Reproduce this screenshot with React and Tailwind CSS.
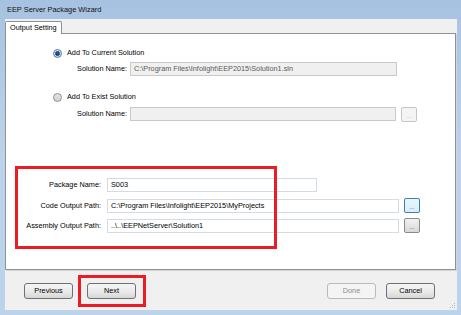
import React from "react";

function TextBox({ value = "", disabled = false, className = "" }) {
  return (
    <div
      className={`h-[14px] border flex items-center pl-[3px] whitespace-nowrap overflow-hidden ${
        disabled
          ? "bg-[#f0f0f0] border-[#c9c9c9] text-[#5a5a5a]"
          : "bg-white border-[#d5dbe3] text-black"
      } ${className}`}
    >
      {value}
    </div>
  );
}

function DotsButton({ variant = "normal" }) {
  const styles = {
    disabled: "border-[#c4c4c4] bg-[#f4f4f4] text-[#b0b0b0]",
    focus: "border-[#3c7fb1] bg-gradient-to-b from-[#eaf6fd] to-[#d9eefa] text-[#444]",
    normal: "border-[#8a8a8a] bg-gradient-to-b from-[#f2f2f2] to-[#d8d8d8] text-[#444]",
  };
  return (
    <div
      className={`ml-[5px] w-[16px] h-[15px] rounded-[2px] border flex items-center justify-center text-[6px] leading-none pt-[3px] ${styles[variant]}`}
    >
      ...
    </div>
  );
}

function Button({ label, disabled = false }) {
  return (
    <div
      className={`w-[49px] h-[16px] rounded-[3px] border flex items-center justify-center ${
        disabled
          ? "border-[#b9bcbe] bg-[#f4f4f4] text-[#8d8d8d]"
          : "border-[#707070] bg-gradient-to-b from-[#f6f6f6] via-[#ebebeb] to-[#d7d7d7] text-black"
      }`}
    >
      {label}
    </div>
  );
}

function Radio({ checked }) {
  return (
    <div
      className={`w-[9px] h-[9px] rounded-full border flex items-center justify-center ${
        checked
          ? "border-[#5b7a98] bg-gradient-to-b from-[#dfe9f3] to-[#c5d6e8]"
          : "border-[#8e8f8f] bg-gradient-to-b from-[#e6e6e6] to-[#cfcfcf]"
      }`}
    >
      {checked && (
        <div className="w-[5px] h-[5px] rounded-full bg-gradient-to-b from-[#2a6fb0] to-[#0c3d73] border border-[#0a3a6a]" />
      )}
    </div>
  );
}

export default function App() {
  return (
    <div
      className="relative w-[461px] h-[315px] flex flex-col bg-gradient-to-b from-[#a7c2e1] via-[#bdd3ec] to-[#bcd3ec] text-[7.3px] leading-none text-black overflow-hidden"
      style={{ fontFamily: '"Liberation Sans", Arial, sans-serif' }}
    >
      {/* Title bar */}
      <div className="h-[19px] flex items-center pl-[7px] text-[7.4px] text-[#111] shrink-0">
        EEP Server Package Wizard
      </div>

      {/* Body */}
      <div className="ml-[5px] mr-[4px] mb-[5px] flex-1 bg-[#f0f0f0] flex flex-col">
        {/* Tab strip */}
        <div className="h-[14px] flex items-end shrink-0">
          <div className="w-[57px] h-[13px] bg-white border border-b-0 border-[#8e9197] rounded-t-[2px] flex items-center pl-[4px] relative top-[1px] z-10">
            Output Setting
          </div>
        </div>

        {/* Panel */}
        <div className="h-[237px] mr-[1px] bg-white border border-[#8e9197] shadow-[1px_1px_0_#d5d5d5] flex flex-col shrink-0">
          {/* radio 1 */}
          <div className="mt-[14px] ml-[47px] h-[10px] flex items-center">
            <Radio checked />
            <span className="ml-[5px]">Add To Current Solution</span>
          </div>
          <div className="mt-[4px] h-[14px] flex items-center">
            <div className="w-[124px] text-right pr-[3px]">Solution Name:</div>
            <TextBox
              disabled
              className="w-[267px]"
              value="C:\Program Files\Infolight\EEP2015\Solution1.sln"
            />
          </div>

          {/* radio 2 */}
          <div className="mt-[16px] ml-[47px] h-[10px] flex items-center">
            <Radio checked={false} />
            <span className="ml-[5px]">Add To Exist Solution</span>
          </div>
          <div className="mt-[4px] h-[16px] flex items-center">
            <div className="w-[124px] text-right pr-[3px]">Solution Name:</div>
            <TextBox disabled className="w-[266px]" />
            <DotsButton variant="disabled" />
          </div>

          {/* package */}
          <div className="mt-[56px] h-[14px] flex items-center">
            <div className="w-[96px] text-right pr-[1px]">Package Name:</div>
            <TextBox className="ml-[5px] w-[210px]" value="S003" />
          </div>
          <div className="mt-[6px] h-[15px] flex items-center">
            <div className="w-[96px] text-right pr-[1px]">Code Output Path:</div>
            <TextBox
              className="ml-[5px] w-[292px]"
              value="C:\Program Files\Infolight\EEP2015\MyProjects"
            />
            <DotsButton variant="focus" />
          </div>
          <div className="mt-[5px] h-[15px] flex items-center">
            <div className="w-[96px] text-right pr-[1px]">Assembly Output Path:</div>
            <TextBox
              className="ml-[5px] w-[292px]"
              value="..\..\EEPNetServer\Solution1"
            />
            <DotsButton variant="normal" />
          </div>
        </div>

        {/* Footer */}
        <div className="flex-1 flex items-start pt-[13px] pl-[19px] pr-[22px] relative">
          <Button label="Previous" />
          <div className="ml-[14px]">
            <Button label="Next" />
          </div>
          <div className="ml-auto">
            <Button label="Done" disabled />
          </div>
          <div className="ml-[10px]">
            <Button label="Cancel" />
          </div>
          {/* size grip */}
          <svg
            className="absolute right-[1px] bottom-[1px]"
            width="6"
            height="6"
            viewBox="0 0 6 6"
          >
            <rect x="4" y="0" width="1" height="1" fill="#b8b8b8" />
            <rect x="2" y="2" width="1" height="1" fill="#b8b8b8" />
            <rect x="4" y="2" width="1" height="1" fill="#b8b8b8" />
            <rect x="0" y="4" width="1" height="1" fill="#b8b8b8" />
            <rect x="2" y="4" width="1" height="1" fill="#b8b8b8" />
            <rect x="4" y="4" width="1" height="1" fill="#b8b8b8" />
          </svg>
        </div>
      </div>

      {/* Red annotation boxes */}
      <div className="absolute left-[15px] top-[166px] w-[262px] h-[83px] border-[3px] border-[#ec1c24] pointer-events-none" />
      <div className="absolute left-[78px] top-[275px] w-[68px] h-[32px] border-[3px] border-[#ec1c24] pointer-events-none" />
    </div>
  );
}
